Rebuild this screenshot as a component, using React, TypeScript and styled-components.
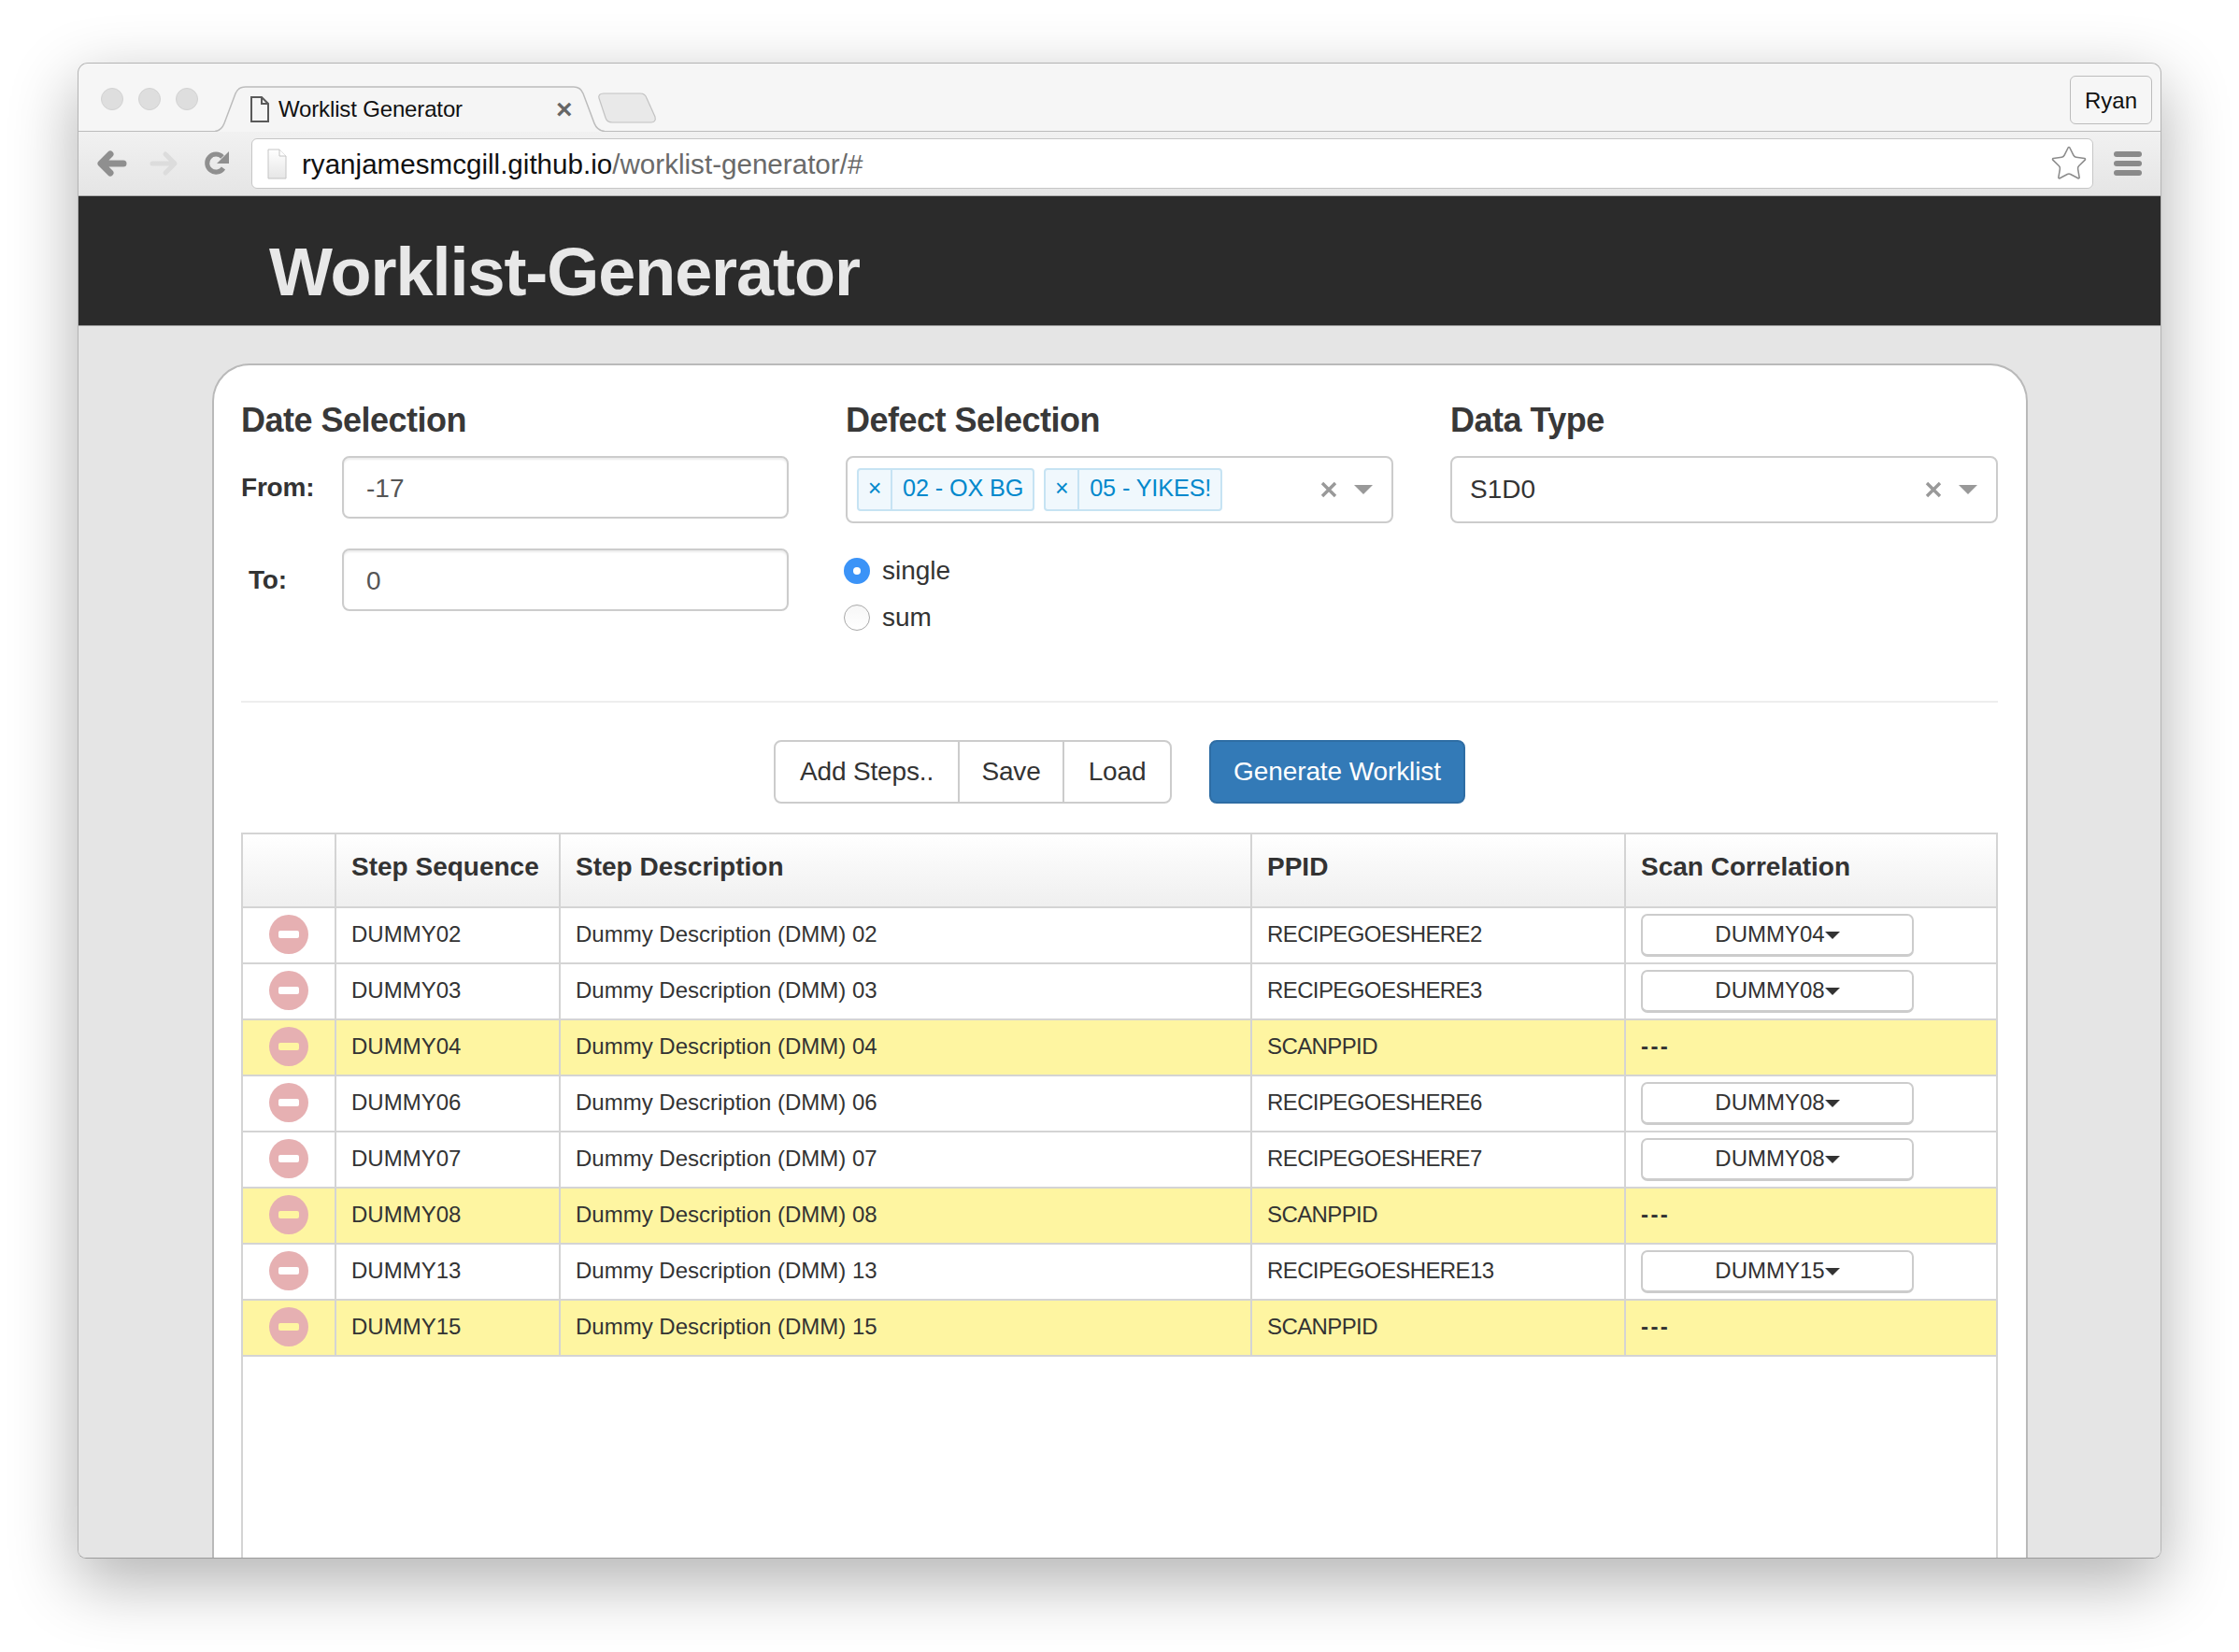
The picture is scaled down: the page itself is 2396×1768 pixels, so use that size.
import * as React from "react";
import styled, { createGlobalStyle } from "styled-components";
import { Star } from "lucide-react";

const GlobalStyle = createGlobalStyle`
  html, body {
    margin: 0;
    padding: 0;
    background: #fff;
  }
  * {
    box-sizing: border-box;
  }
  body {
    font-family: "Liberation Sans", Arial, sans-serif;
    color: #333;
  }
`;

const Page = styled.div`
  width: 2396px;
  height: 1768px;
  padding: 67px 83px 100px 83px;
  overflow: hidden;
`;

const BrowserWindow = styled.div`
  display: flex;
  flex-direction: column;
  height: 1601px;
  border: 1px solid #b4b4b4;
  border-bottom-color: #9c9c9c;
  border-radius: 11px 11px 9px 9px;
  overflow: hidden;
  background: #e5e5e5;
`;

const Shadow = styled.div`
  border-radius: 11px;
  box-shadow: 0 24px 70px 2px rgba(0, 0, 0, 0.3);
`;

const TabStrip = styled.div`
  display: flex;
  align-items: flex-end;
  flex: none;
  height: 73px;
  padding-left: 24px;
  padding-right: 9px;
  background: #f6f6f6;
  border-bottom: 1px solid #bcbcbc;
`;

const Lights = styled.div`
  display: flex;
  gap: 16px;
  align-self: flex-start;
  margin-top: 26px;
  margin-right: 18px;
`;

const Light = styled.span`
  width: 24px;
  height: 24px;
  border-radius: 50%;
  background: #dedede;
  border: 1px solid #d2d2d2;
`;

const Tab = styled.div`
  position: relative;
  display: flex;
  align-items: center;
  flex: none;
  width: 417px;
  height: 49px;
  margin-bottom: -1px;
  padding-left: 38px;
  font-size: 24px;
  color: #111;
`;

const TabShape = styled.svg`
  position: absolute;
  left: 0;
  top: 0;
`;

const TabIcon = styled.svg`
  position: relative;
  flex: none;
  margin-right: 10px;
`;

const TabTitle = styled.span`
  position: relative;
  width: 297px;
  letter-spacing: -0.15px;
`;

const TabClose = styled.span`
  position: relative;
  font-size: 30px;
  line-height: 30px;
  font-weight: 700;
  color: #666;
`;

const NewTab = styled.svg`
  flex: none;
  margin-left: -8px;
  margin-bottom: 8px;
`;

const ProfileButton = styled.div`
  display: flex;
  align-items: center;
  justify-content: center;
  align-self: flex-start;
  width: 88px;
  height: 52px;
  margin-top: 13px;
  margin-left: auto;
  padding-top: 2px;
  font-size: 24px;
  color: #111;
  border: 1px solid #bcbcbc;
  border-radius: 6px;
`;

const Toolbar = styled.div`
  display: flex;
  align-items: center;
  flex: none;
  height: 69px;
  padding: 0 20px 0 20px;
  background: linear-gradient(#f1f1f1, #e5e5e5);
  border-bottom: 1px solid #b0b0b0;
`;

const NavIcon = styled.svg<{ $gap: number }>`
  flex: none;
  margin-right: ${(p) => p.$gap}px;
`;

const AddressBar = styled.div`
  display: flex;
  align-items: center;
  flex: none;
  width: 1971px;
  height: 54px;
  padding-left: 16px;
  padding-right: 8px;
  background: #fff;
  border: 1px solid #c6c6c6;
  border-radius: 6px;
`;

const PageIcon = styled.svg`
  flex: none;
  margin-right: 16px;
`;

const UrlHost = styled.span`
  margin-top: 2px;
  font-size: 29.6px;
  color: #111;
`;

const UrlPath = styled.span`
  margin-top: 2px;
  font-size: 29.6px;
  color: #6a6a6a;
`;

const BookmarkStar = styled(Star)`
  flex: none;
  margin-left: auto;
  margin-right: -4px;
  fill: #fff;
`;

const MenuButton = styled.div`
  display: flex;
  flex-direction: column;
  gap: 4px;
  margin-left: 22px;
`;

const MenuBar = styled.span`
  width: 30px;
  height: 6px;
  border-radius: 3px;
  background: #8a8a8a;
`;

const Masthead = styled.header`
  flex: none;
  height: 139px;
  padding: 44px 0 0 204px;
  background: #2b2b2b;
  border-bottom: 1px solid #9a9a9a;
`;

const AppTitle = styled.h1`
  margin: 0;
  font-size: 72px;
  line-height: 74px;
  font-weight: 700;
  letter-spacing: -1.05px;
  color: #e8e8e8;
`;

const Content = styled.main`
  flex: 1;
  min-height: 0;
  padding: 40px 142px 0 143px;
  background: #e5e5e5;
`;

const Panel = styled.section`
  display: flex;
  flex-direction: column;
  height: 100%;
  padding: 0 30px 0 29px;
  background: #fff;
  border: 2px solid #b9b9b9;
  border-bottom: none;
  border-radius: 40px 40px 0 0;
`;

const FilterGrid = styled.div`
  display: grid;
  grid-template-columns: 586px 586px 1fr;
  gap: 61px;
  flex: none;
  height: 361px;
  padding-top: 38px;
  border-bottom: 2px solid #eee;
`;

const SectionTitle = styled.h4`
  margin: 0 0 17px;
  font-size: 36px;
  line-height: 42px;
  font-weight: 700;
  letter-spacing: -0.5px;
  color: #383838;
`;

const DateRow = styled.div`
  display: flex;
  align-items: center;
  margin-bottom: 32px;
`;

const DateLabel = styled.label<{ $indent?: number }>`
  width: 108px;
  padding-left: ${(p) => p.$indent ?? 0}px;
  font-size: 28px;
  font-weight: 700;
  letter-spacing: -0.2px;
`;

const TextInput = styled.input`
  flex: 1;
  min-width: 0;
  height: 67px;
  padding: 2px 24px 0;
  font-family: inherit;
  font-size: 28px;
  color: #555;
  background: #fff;
  border: 2px solid #ccc;
  border-radius: 8px;
  box-shadow: inset 0 2px 2px rgba(0, 0, 0, 0.075);
  outline: none;
`;

const SelectBox = styled.div<{ $inset: number }>`
  display: flex;
  align-items: center;
  height: 72px;
  padding: 0 20px 0 ${(p) => p.$inset}px;
  font-size: 28px;
  background: #fff;
  border: 2px solid #ccc;
  border-radius: 8px;
`;

const Tag = styled.div`
  display: flex;
  align-items: stretch;
  height: 46px;
  margin-right: 10px;
  font-size: 25.2px;
  line-height: 39px;
  letter-spacing: -0.1px;
  color: #0088cc;
  background: #f0f8fd;
  border: 2px solid #c6e3f3;
  border-radius: 4px;
`;

const TagRemove = styled.span`
  width: 36px;
  text-align: center;
  border-right: 2px solid #c6e3f3;
`;

const TagLabel = styled.span`
  padding: 0 10px 0 11px;
`;

const ClearIcon = styled.svg`
  flex: none;
  margin-left: auto;
  margin-right: 18px;
`;

const SelectArrow = styled.span`
  flex: none;
  width: 0;
  height: 0;
  border-style: solid;
  border-width: 10px 10px 0;
  border-color: #999 transparent transparent;
`;

const RadioGroup = styled.div`
  display: flex;
  flex-direction: column;
  gap: 18px;
  margin-top: 35px;
  margin-left: -2px;
`;

const RadioRow = styled.label`
  display: flex;
  align-items: center;
  gap: 13px;
  height: 32px;
  font-size: 28px;
  color: #333;
`;

const RadioDot = styled.span<{ $on?: boolean }>`
  display: flex;
  align-items: center;
  justify-content: center;
  width: 28px;
  height: 28px;
  border-radius: 50%;
  background: ${(p) => (p.$on ? "#3b93f7" : "linear-gradient(#f7f7f7, #fff)")};
  border: ${(p) => (p.$on ? "none" : "1px solid #a8a8a8")};
  &::after {
    content: "";
    display: ${(p) => (p.$on ? "block" : "none")};
    width: 8px;
    height: 8px;
    border-radius: 50%;
    background: #fff;
  }
`;

const ActionBar = styled.div`
  display: flex;
  justify-content: center;
  gap: 40px;
  flex: none;
  margin: 40px 0 31px;
`;

const ButtonGroup = styled.div`
  display: flex;
`;

const GroupButton = styled.button<{ $width: number }>`
  width: ${(p) => p.$width}px;
  height: 68px;
  padding: 0;
  font-family: inherit;
  font-size: 28px;
  letter-spacing: -0.15px;
  color: #333;
  background: #fff;
  border: 2px solid #ccc;
  margin-left: -2px;
  &:first-child {
    margin-left: 0;
    border-radius: 8px 0 0 8px;
  }
  &:last-child {
    border-radius: 0 8px 8px 0;
  }
`;

const PrimaryButton = styled.button`
  width: 274px;
  height: 68px;
  padding: 0;
  font-family: inherit;
  font-size: 28px;
  letter-spacing: -0.1px;
  color: #fff;
  background: #337ab7;
  border: 2px solid #2e6da4;
  border-radius: 8px;
`;

const TableFrame = styled.div`
  flex: 1;
  min-height: 0;
  border: 2px solid #d4d4d4;
  border-bottom: none;
`;

const StepTable = styled.table`
  width: 100%;
  table-layout: fixed;
  border-collapse: separate;
  border-spacing: 0;
`;

const HeadCell = styled.th`
  height: 79px;
  padding: 0 16px 8px;
  font-size: 28px;
  font-weight: 700;
  text-align: left;
  color: #333;
  background: linear-gradient(#fff, #efefef);
  border-right: 2px solid #d4d4d4;
  border-bottom: 2px solid #d4d4d4;
  &:last-child {
    border-right: none;
  }
`;

const BodyCell = styled.td<{ $highlight: boolean; $tight?: boolean }>`
  height: 60px;
  padding: 0 16px 2px;
  font-size: 24px;
  letter-spacing: ${(p) => (p.$tight ? "-0.6px" : "0")};
  color: #333;
  background: ${(p) => (p.$highlight ? "#fef5a1" : "#fff")};
  border-right: 2px solid #d4d4d4;
  border-bottom: 2px solid #d4d4d4;
  &:last-child {
    border-right: none;
  }
`;

const ButtonCell = styled(BodyCell)`
  padding-bottom: 0;
`;

const NoScan = styled.span`
  font-weight: 700;
  letter-spacing: 2.4px;
`;

const RemoveButton = styled.span<{ $highlight: boolean }>`
  display: flex;
  align-items: center;
  justify-content: center;
  width: 42px;
  height: 42px;
  margin: 0 auto;
  border-radius: 50%;
  background: #e6b0b2;
  &::after {
    content: "";
    width: 22px;
    height: 8px;
    border-radius: 2px;
    background: ${(p) => (p.$highlight ? "#fef5a1" : "#fff")};
  }
`;

const CorrelationButton = styled.div`
  display: flex;
  align-items: center;
  justify-content: center;
  width: 292px;
  height: 46px;
  padding-bottom: 2px;
  font-size: 24px;
  color: #333;
  background: #fff;
  border: 2px solid #ccc;
  border-bottom-width: 3px;
  border-radius: 7px;
`;

const Caret = styled.span`
  width: 0;
  height: 0;
  margin-top: 2px;
  border-style: solid;
  border-width: 8px 8px 0;
  border-color: #333 transparent transparent;
`;

const steps = [
  { id: "DUMMY02", desc: "Dummy Description (DMM) 02", ppid: "RECIPEGOESHERE2", scan: "DUMMY04" },
  { id: "DUMMY03", desc: "Dummy Description (DMM) 03", ppid: "RECIPEGOESHERE3", scan: "DUMMY08" },
  { id: "DUMMY04", desc: "Dummy Description (DMM) 04", ppid: "SCANPPID", scan: null },
  { id: "DUMMY06", desc: "Dummy Description (DMM) 06", ppid: "RECIPEGOESHERE6", scan: "DUMMY08" },
  { id: "DUMMY07", desc: "Dummy Description (DMM) 07", ppid: "RECIPEGOESHERE7", scan: "DUMMY08" },
  { id: "DUMMY08", desc: "Dummy Description (DMM) 08", ppid: "SCANPPID", scan: null },
  { id: "DUMMY13", desc: "Dummy Description (DMM) 13", ppid: "RECIPEGOESHERE13", scan: "DUMMY15" },
  { id: "DUMMY15", desc: "Dummy Description (DMM) 15", ppid: "SCANPPID", scan: null },
];

const ClearGlyph = () => (
  <ClearIcon width="18" height="18" viewBox="0 0 18 18">
    <path d="M2 2 16 16M16 2 2 16" stroke="#999" strokeWidth="3.4" />
  </ClearIcon>
);

export default function App() {
  return (
    <Page>
      <GlobalStyle />
      <Shadow>
        <BrowserWindow>
          <TabStrip>
            <Lights>
              <Light />
              <Light />
              <Light />
            </Lights>
            <Tab>
              <TabShape width="417" height="49" viewBox="0 0 417 49">
                <path
                  d="M0 49C5 48 8 45 10 40L22 8C24 3 28 1 33 1H384C389 1 392 3 394 8L406 40C408 45 412 48 417 49Z"
                  fill="#f5f5f5"
                />
                <path
                  d="M0 48.5C5 48 8 45 10 40L22 8C24 3 28 1 33 1H384C389 1 392 3 394 8L406 40C408 45 412 48 417 48.5"
                  fill="none"
                  stroke="#bcbcbc"
                  strokeWidth="1.5"
                />
              </TabShape>
              <TabIcon width="20" height="28" viewBox="0 0 20 28">
                <path d="M1 1H12L19 8V27H1ZM12 1V8H19" fill="none" stroke="#5a5a5a" strokeWidth="2" />
              </TabIcon>
              <TabTitle>Worklist Generator</TabTitle>
              <TabClose>×</TabClose>
            </Tab>
            <NewTab width="64" height="33" viewBox="0 0 64 33">
              <path
                d="M7 1H46C50 1 52 3 53 6L62 26C63 30 61 32 58 32H16C12 32 10 30 9 27L2 6C1 3 3 1 7 1Z"
                fill="#e9e9e9"
                stroke="#c2c2c2"
                strokeWidth="1.2"
              />
            </NewTab>
            <ProfileButton>Ryan</ProfileButton>
          </TabStrip>
          <Toolbar>
            <NavIcon $gap={23} width="32" height="28" viewBox="0 0 32 28">
              <path
                d="M28 14H6M14 4 4 14 14 24"
                fill="none"
                stroke="#8f8f8f"
                strokeWidth="7"
                strokeLinecap="round"
                strokeLinejoin="round"
              />
            </NavIcon>
            <NavIcon $gap={27} width="32" height="28" viewBox="0 0 32 28">
              <path
                d="M4 14H26M18 4 28 14 18 24"
                fill="none"
                stroke="#dcdcdc"
                strokeWidth="5"
                strokeLinecap="round"
                strokeLinejoin="round"
              />
            </NavIcon>
            <NavIcon $gap={23} width="28" height="28" viewBox="0 0 28 28">
              <path d="M21 19A9.5 9.5 0 1 1 20 7" fill="none" stroke="#8f8f8f" strokeWidth="5" />
              <path d="M27 1V14H14Z" fill="#8f8f8f" />
            </NavIcon>
            <AddressBar>
              <PageIcon width="21" height="33" viewBox="0 0 21 33">
                <defs>
                  <linearGradient id="sheet" x1="0" y1="0" x2="0" y2="1">
                    <stop offset="0" stopColor="#fff" />
                    <stop offset="1" stopColor="#e6e6e6" />
                  </linearGradient>
                </defs>
                <path d="M1 1H13L20 8V32H1Z" fill="url(#sheet)" stroke="#c4c4c4" strokeWidth="1" />
                <path d="M13 1V8H20" fill="#fff" stroke="#c4c4c4" strokeWidth="1" />
              </PageIcon>
              <UrlHost>ryanjamesmcgill.github.io</UrlHost>
              <UrlPath>/worklist-generator/#</UrlPath>
              <BookmarkStar size={42} strokeWidth={0.9} color="#8c8c8c" />
            </AddressBar>
            <MenuButton>
              <MenuBar />
              <MenuBar />
              <MenuBar />
            </MenuButton>
          </Toolbar>
          <Masthead>
            <AppTitle>Worklist-Generator</AppTitle>
          </Masthead>
          <Content>
            <Panel>
              <FilterGrid>
                <div>
                  <SectionTitle>Date Selection</SectionTitle>
                  <DateRow>
                    <DateLabel>From:</DateLabel>
                    <TextInput readOnly value="-17" />
                  </DateRow>
                  <DateRow>
                    <DateLabel $indent={8}>To:</DateLabel>
                    <TextInput readOnly value="0" />
                  </DateRow>
                </div>
                <div>
                  <SectionTitle>Defect Selection</SectionTitle>
                  <SelectBox $inset={10}>
                    <Tag>
                      <TagRemove>×</TagRemove>
                      <TagLabel>02 - OX BG</TagLabel>
                    </Tag>
                    <Tag>
                      <TagRemove>×</TagRemove>
                      <TagLabel>05 - YIKES!</TagLabel>
                    </Tag>
                    <ClearGlyph />
                    <SelectArrow />
                  </SelectBox>
                  <RadioGroup>
                    <RadioRow>
                      <RadioDot $on />
                      single
                    </RadioRow>
                    <RadioRow>
                      <RadioDot />
                      sum
                    </RadioRow>
                  </RadioGroup>
                </div>
                <div>
                  <SectionTitle>Data Type</SectionTitle>
                  <SelectBox $inset={19}>
                    S1D0
                    <ClearGlyph />
                    <SelectArrow />
                  </SelectBox>
                </div>
              </FilterGrid>
              <ActionBar>
                <ButtonGroup>
                  <GroupButton $width={199}>Add Steps..</GroupButton>
                  <GroupButton $width={114}>Save</GroupButton>
                  <GroupButton $width={117}>Load</GroupButton>
                </ButtonGroup>
                <PrimaryButton>Generate Worklist</PrimaryButton>
              </ActionBar>
              <TableFrame>
                <StepTable>
                  <colgroup>
                    <col width="100" />
                    <col width="240" />
                    <col width="740" />
                    <col width="400" />
                    <col width="396" />
                  </colgroup>
                  <thead>
                    <tr>
                      <HeadCell />
                      <HeadCell>Step Sequence</HeadCell>
                      <HeadCell>Step Description</HeadCell>
                      <HeadCell>PPID</HeadCell>
                      <HeadCell>Scan Correlation</HeadCell>
                    </tr>
                  </thead>
                  <tbody>
                    {steps.map((step) => {
                      const highlight = step.scan === null;
                      return (
                        <tr key={step.id}>
                          <BodyCell $highlight={highlight}>
                            <RemoveButton $highlight={highlight} />
                          </BodyCell>
                          <BodyCell $highlight={highlight}>{step.id}</BodyCell>
                          <BodyCell $highlight={highlight}>{step.desc}</BodyCell>
                          <BodyCell $highlight={highlight} $tight>
                            {step.ppid}
                          </BodyCell>
                          {step.scan ? (
                            <ButtonCell $highlight={highlight}>
                              <CorrelationButton>
                                {step.scan}
                                <Caret />
                              </CorrelationButton>
                            </ButtonCell>
                          ) : (
                            <BodyCell $highlight={highlight}>
                              <NoScan>---</NoScan>
                            </BodyCell>
                          )}
                        </tr>
                      );
                    })}
                  </tbody>
                </StepTable>
              </TableFrame>
            </Panel>
          </Content>
        </BrowserWindow>
      </Shadow>
    </Page>
  );
}
